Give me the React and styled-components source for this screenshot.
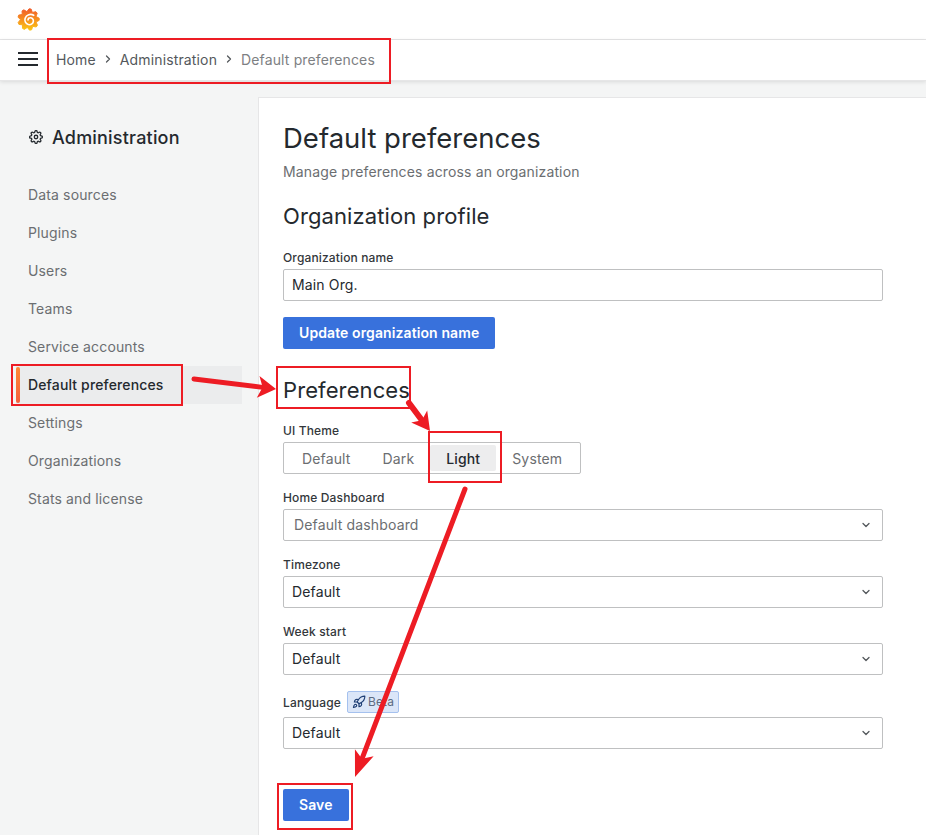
import React from 'react'
import styled, { createGlobalStyle } from 'styled-components'
import { ChevronDown, ChevronRight, Rocket } from 'lucide-react'
import { FiSettings } from 'react-icons/fi'

const GlobalStyle = createGlobalStyle`
  html, body { margin: 0; padding: 0; height: 835px; overflow: hidden; background: #fff; }
  * { box-sizing: border-box; }
  body { font-family: Inter, "Noto Sans", sans-serif; font-size: 14px; color: #24292e; letter-spacing: 0.14px; }
`

const Page = styled.div`
  position: relative;
  width: 926px;
  height: 835px;
  overflow: hidden;
  display: flex;
  flex-direction: column;
`
const TopBar = styled.div`
  height: 40px;
  flex: none;
  display: flex;
  align-items: center;
  padding-left: 17px;
  border-bottom: 1px solid #e6e6e7;
`
const NavBar = styled.div`
  height: 41px;
  flex: none;
  display: flex;
  align-items: center;
  padding: 0 0 2px 18px;
  background: #fff;
  border-bottom: 1px solid #e6e6e7;
  box-shadow: 0 1px 4px rgba(24, 26, 27, 0.12);
  z-index: 1;
`
const Burger = styled.div`
  width: 20px;
  display: flex;
  flex-direction: column;
  gap: 4px;
  margin-right: 18px;
  span { height: 2px; background: #24292e; display: block; }
`
const Crumbs = styled.div`
  display: flex;
  align-items: center;
`
const Crumb = styled.span`
  color: ${p => (p.$last ? '#7d8083' : '#54585c')};
`
const CrumbSep = styled(ChevronRight)`
  width: 12px;
  height: 12px;
  margin: 0 6px;
  color: #54585c;
  stroke-width: 2.5;
`
const Body = styled.div`
  flex: 1;
  display: flex;
  background: #f4f5f5;
  min-height: 0;
`
const Sidebar = styled.nav`
  width: 258px;
  flex: none;
  padding: 45px 16px 0 16px;
`
const SideTitle = styled.div`
  display: flex;
  align-items: center;
  gap: 9px;
  padding-left: 13px;
  height: 22px;
  font-size: 18px;
  font-weight: 500;
  letter-spacing: 0.2px;
  margin-bottom: 28px;
  svg { width: 14px; height: 14px; stroke-width: 2.2; }
`
const SideItem = styled.div`
  position: relative;
  height: 38px;
  width: 226px;
  display: flex;
  align-items: center;
  padding: 0 0 1px 12px;
  color: ${p => (p.$active ? '#24292e' : '#6b6e71')};
  font-weight: ${p => (p.$active ? 500 : 400)};
  background: ${p => (p.$active ? '#ebeced' : 'transparent')};
  &::before {
    content: ${p => (p.$active ? "''" : 'none')};
    position: absolute;
    left: 0;
    top: 1px;
    bottom: 1px;
    width: 4px;
    border-radius: 2px;
    background: linear-gradient(0deg, #f55f3e, #ff8833);
  }
`
const Content = styled.main`
  flex: 1;
  margin-top: 16px;
  background: #fff;
  border-left: 1px solid #e6e6e7;
  border-top: 1px solid #e6e6e7;
  padding: 23px 43px 0 24px;
`
const Title = styled.h1`
  margin: 0;
  font-size: 27.5px;
  font-weight: 400;
  line-height: 34px;
  letter-spacing: 0;
`
const Subtitle = styled.div`
  margin-top: 6px;
  line-height: 21px;
  color: #6b6e71;
`
const Heading = styled.h2`
  margin: ${p => p.$top}px 0 ${p => p.$bottom}px;
  font-size: 22px;
  font-weight: 400;
  line-height: 28px;
  letter-spacing: 0.1px;
`
const Field = styled.div`
  margin-bottom: 16px;
`
const Label = styled.label`
  display: flex;
  align-items: center;
  gap: 6px;
  font-size: 12px;
  font-weight: 500;
  line-height: 16px;
  color: #33373b;
  margin-bottom: ${p => p.$gap ?? 3}px;
`
const LabelText = styled.span`
  padding-top: 2px;
`
const BetaTag = styled.span`
  height: 22px;
  display: inline-flex;
  align-items: center;
  gap: 2px;
  padding: 0 4px;
  border: 1px solid #a5c1ee;
  border-radius: 2px;
  background: #dbe6f8;
  color: #5d6b82;
  font-weight: 400;
  svg { width: 14px; height: 14px; color: #1f3f75; }
`
const Input = styled.div`
  height: 32px;
  border: 1px solid #bfc0c1;
  border-radius: 2px;
  display: flex;
  align-items: center;
  justify-content: space-between;
  padding: 0 10px 1px ${p => (p.$placeholder ? 10 : 8)}px;
  color: ${p => (p.$placeholder ? '#6b6e71' : '#24292e')};
  svg { width: 12px; height: 12px; color: #54585c; stroke-width: 2.6; }
`
const Button = styled.button`
  display: block;
  height: 32px;
  margin-top: ${p => p.$top ?? 0}px;
  padding: 0 16px 2px;
  border: none;
  border-radius: 2px;
  background: #3871dc;
  color: #fff;
  font: 600 14px Inter, sans-serif;
  letter-spacing: 0.1px;
`
const Radio = styled.div`
  display: inline-flex;
  height: 32px;
  padding: 2px;
  border: 1px solid #bfc0c1;
  border-radius: 2px;
  vertical-align: top;
`
const RadioOption = styled.div`
  display: flex;
  align-items: center;
  padding: 0 16px;
  border-radius: 2px;
  color: ${p => (p.$active ? '#24292e' : '#6b6e71')};
  font-weight: ${p => (p.$active ? 500 : 400)};
  background: ${p => (p.$active ? '#ededee' : 'transparent')};
`
const Annotations = styled.svg`
  position: absolute;
  left: 0;
  top: 0;
  z-index: 5;
  pointer-events: none;
`

const sideItems = ['Data sources', 'Plugins', 'Users', 'Teams', 'Service accounts', 'Default preferences', 'Settings', 'Organizations', 'Stats and license']

// nine blunt teeth round the centre of the logo
const gearPoints = () => {
  const pts = []
  for (let i = 0; i < 9; i++) {
    const a = (i / 9) * Math.PI * 2 - Math.PI / 2 + 0.15
    const step = (Math.PI * 2) / 9
    const at = (r, t) => `${(12 + Math.cos(t) * r).toFixed(2)},${(12 + Math.sin(t) * r).toFixed(2)}`
    pts.push(at(8.4, a - step * 0.5), at(11.2, a - step * 0.14), at(11.2, a + step * 0.14))
  }
  return pts.join(' ')
}

const Logo = () => (
  <svg width="23" height="23" viewBox="0 0 24 24">
    <defs>
      <linearGradient id="grafana" x1="0" y1="0" x2="0" y2="1">
        <stop offset="0" stopColor="#f15b2a" />
        <stop offset="1" stopColor="#fbc512" />
      </linearGradient>
    </defs>
    <polygon fill="url(#grafana)" stroke="url(#grafana)" strokeWidth="1" strokeLinejoin="round" points={gearPoints()} />
    <path
      fill="none"
      stroke="#fff"
      strokeWidth="1.7"
      strokeLinecap="round"
      d="M17.4 7.6c-3.2-2-7.6-.6-8.9 3-1 3 .6 6 3.4 6.700 2.700.6 5.100-1.200 5.200-3.600.1-2.100-1.500-3.700-3.400-3.500-1.300.1-2.200 1.100-2.200 2.200"
    />
  </svg>
)

const Box = ({ x, y, w, h }) => <rect x={x} y={y} width={w} height={h} fill="none" stroke="#ed1c24" strokeWidth="2" />

// line plus a filled, notched head pointing at x2,y2
const Arrow = ({ x1, y1, x2, y2, width = 4, head = 18, spread = 9 }) => {
  const len = Math.hypot(x2 - x1, y2 - y1)
  const ux = (x2 - x1) / len
  const uy = (y2 - y1) / len
  const bx = x2 - ux * head
  const by = y2 - uy * head
  const nx = x2 - ux * head * 0.75
  const ny = y2 - uy * head * 0.75
  const points = [
    [x2, y2],
    [bx - uy * spread, by + ux * spread],
    [nx, ny],
    [bx + uy * spread, by - ux * spread],
  ].join(' ')
  return (
    <g>
      <line x1={x1} y1={y1} x2={nx} y2={ny} stroke="#ed1c24" strokeWidth={width} strokeLinecap="round" />
      <polygon points={points} fill="#ed1c24" />
    </g>
  )
}

export default function App() {
  return (
    <Page>
      <GlobalStyle />
      <TopBar><Logo /></TopBar>
      <NavBar>
        <Burger><span /><span /><span /></Burger>
        <Crumbs>
          <Crumb>Home</Crumb>
          <CrumbSep />
          <Crumb>Administration</Crumb>
          <CrumbSep />
          <Crumb $last>Default preferences</Crumb>
        </Crumbs>
      </NavBar>
      <Body>
        <Sidebar>
          <SideTitle><FiSettings />Administration</SideTitle>
          {sideItems.map(item => (
            <SideItem key={item} $active={item === 'Default preferences'}>{item}</SideItem>
          ))}
        </Sidebar>
        <Content>
          <Title>Default preferences</Title>
          <Subtitle>Manage preferences across an organization</Subtitle>
          <Heading $top={20} $bottom={20}>Organization profile</Heading>
          <Field>
            <Label>Organization name</Label>
            <Input>Main Org.</Input>
          </Field>
          <Button>Update organization name</Button>
          <Heading $top={27} $bottom={19}>Preferences</Heading>
          <Field>
            <Label>UI Theme</Label>
            <Radio>
              <RadioOption>Default</RadioOption>
              <RadioOption>Dark</RadioOption>
              <RadioOption $active>Light</RadioOption>
              <RadioOption>System</RadioOption>
            </Radio>
          </Field>
          <Field>
            <Label>Home Dashboard</Label>
            <Input $placeholder>Default dashboard<ChevronDown /></Input>
          </Field>
          <Field>
            <Label>Timezone</Label>
            <Input>Default<ChevronDown /></Input>
          </Field>
          <Field>
            <Label>Week start</Label>
            <Input>Default<ChevronDown /></Input>
          </Field>
          <Field>
            <Label $gap={4}><LabelText>Language</LabelText><BetaTag><Rocket />Beta</BetaTag></Label>
            <Input>Default<ChevronDown /></Input>
          </Field>
          <Button $top={40}>Save</Button>
        </Content>
      </Body>
      <Annotations width="926" height="835" viewBox="0 0 926 835">
        <Box x={48} y={39} w={342} h={44} />
        <Box x={12} y={365} w={170} h={40} />
        <Box x={277} y={367} w={133} h={41} />
        <Box x={429} y={432} w={72} h={50} />
        <Box x={278} y={784} w={74} h={45} />
        <Arrow x1={194} y1={379} x2={276} y2={389} width={5} head={18} spread={11} />
        <Arrow x1={409} y1={403} x2={430} y2={431} width={6} head={18} spread={10} />
        <Arrow x1={465} y1={489} x2={355} y2={777} width={5} head={26} spread={10} />
      </Annotations>
    </Page>
  )
}
